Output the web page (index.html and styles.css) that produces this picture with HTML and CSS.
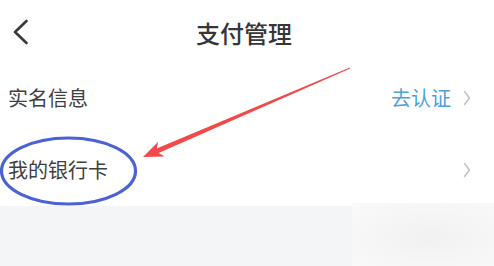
FILE: index.html
```html
<!DOCTYPE html>
<html lang="zh-CN">
<head>
<meta charset="utf-8">
<title>支付管理</title>
<link rel="stylesheet" href="styles.css">
</head>
<body>
<div class="page">
  <header class="nav">
    <span class="back">
      <svg width="18" height="26" viewBox="0 0 18 26"><path d="M15.5 2 L4 13 L15.5 24" fill="none" stroke="#3a3a3a" stroke-width="2.6" stroke-linecap="round" stroke-linejoin="round"/></svg>
    </span>
    <h1 class="title">支付管理</h1>
  </header>
  <div class="list">
    <div class="row row-first">
      <span class="label">实名信息</span>
      <span class="right">
        <span class="action">去认证</span>
        <svg class="chev" width="8" height="16" viewBox="0 0 8 16"><path d="M1.5 1.5 L6.5 8 L1.5 14.5" fill="none" stroke="#c4c4c4" stroke-width="1.6" stroke-linecap="round" stroke-linejoin="round"/></svg>
      </span>
    </div>
    <div class="row row-second">
      <span class="label">我的银行卡</span>
      <span class="right">
        <svg class="chev" width="8" height="16" viewBox="0 0 8 16"><path d="M1.5 1.5 L6.5 8 L1.5 14.5" fill="none" stroke="#c4c4c4" stroke-width="1.6" stroke-linecap="round" stroke-linejoin="round"/></svg>
      </span>
    </div>
  </div>
  <div class="footer">
    <div class="footer-left"></div>
    <div class="footer-right"></div>
  </div>
  <svg class="marks" width="494" height="266" viewBox="0 0 494 266">
    <ellipse cx="68.5" cy="171" rx="67" ry="33" fill="none" stroke="#4a62d3" stroke-width="3.2"/>
    <polygon points="143,157 164.6,156.5 158.7,153 350.2,68.5 349.8,67.5 156.7,148.4 158.2,141.7" fill="#f24a4a"/>
  </svg>
</div>
</body>
</html>
```
FILE: styles.css
```css
* { box-sizing: border-box; }
html, body { margin: 0; padding: 0; }
body {
  background: #ffffff;
  font-family: "Noto Sans CJK SC", "Noto Sans", sans-serif;
  color: #3a3a3a;
}
.page {
  position: relative;
  width: 494px;
  height: 266px;
  overflow: hidden;
  display: flex;
  flex-direction: column;
}
.nav {
  height: 66px;
  display: flex;
  align-items: center;
  justify-content: center;
  position: relative;
}
.back {
  position: absolute;
  left: 11px;
  top: 19px;
  width: 18px;
  height: 26px;
  display: flex;
}
.title {
  margin: 0 0 0 -6px;
  font-size: 24px;
  font-weight: 500;
  line-height: 24px;
  color: #363636;
}
.list {
  display: flex;
  flex-direction: column;
}
.row {
  display: flex;
  align-items: center;
  justify-content: space-between;
  padding: 0 23px 0 8px;
}
.row-first { height: 64px; }
.row-second { height: 76px; padding-top: 4px; }
.label {
  font-size: 20px;
  line-height: 20px;
  color: #404040;
}
.right {
  display: flex;
  align-items: center;
  gap: 12px;
}
.action {
  font-size: 20px;
  line-height: 20px;
  color: #4ea2d8;
}
.chev { display: block; }
.footer {
  flex: 1;
  display: flex;
  background: #f4f5f6;
}
.footer-left { width: 352px; }
.footer-right {
  flex: 1;
  margin-top: -3px;
  background: radial-gradient(ellipse at 55% 55%, #f1f1f1 0%, #f5f5f5 45%, #f8f8f8 80%, #fafafa 100%);
}
.marks {
  position: absolute;
  left: 0;
  top: 0;
  pointer-events: none;
}
```
